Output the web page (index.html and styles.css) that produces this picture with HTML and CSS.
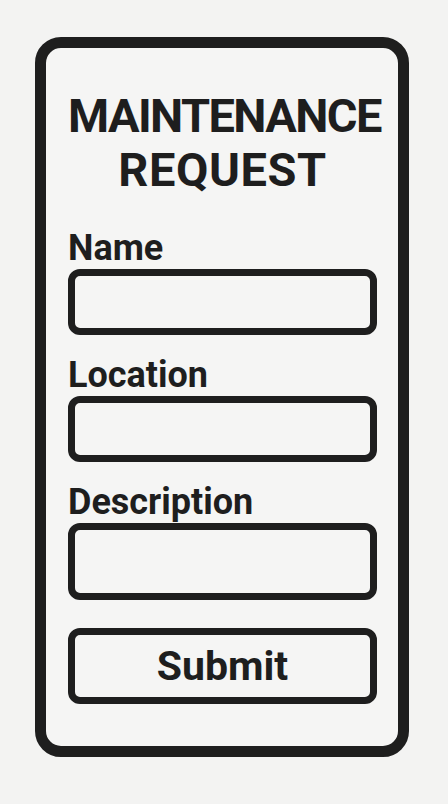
FILE: index.html
```html
<!DOCTYPE html>
<html lang="en">

<head>
    <meta charset="UTF-8">
    <meta name="viewport" content="width=device-width, initial-scale=1.0">
    <title>Maintenance Request</title>
    <link rel="stylesheet" href="styles.css">
</head>

<body>

    <div id="frame">
        <h1>MAINTENANCE<br><span class="wide">REQUEST</span></h1>

        <form id="request-form">
            <div class="field">
                <label for="name">Name</label>
                <input type="text" id="name">
            </div>

            <div class="field">
                <label for="location">Location</label>
                <input type="text" id="location">
            </div>

            <div class="field">
                <label for="description">Description</label>
                <textarea id="description"></textarea>
            </div>

            <button type="submit">Submit</button>
        </form>
    </div>

</body>

</html>
```

FILE: styles.css
```css
body {
    font-family: 'Roboto', 'Liberation Sans', sans-serif;
    margin: 0;
    padding: 0;
    background-color: #f3f3f2;
    color: #1e1e1e;
}

#frame {
    box-sizing: border-box;
    width: 374px;
    height: 720px;
    margin: 37px 0 0 35px;
    padding: 41px 21px 0 22px;
    border: 11px solid #1e1e1e;
    border-radius: 26px;
    background-color: #f5f5f4;
}

h1 {
    margin: 0 0 31px;
    font-size: 47px;
    font-weight: 700;
    line-height: 54px;
    letter-spacing: -1.6px;
    text-align: center;
}

h1 .wide {
    letter-spacing: 0.6px;
}

.field {
    margin-bottom: 20px;
}

.field label {
    display: block;
    margin-bottom: 1px;
    font-size: 36px;
    font-weight: 700;
    line-height: 40px;
}

.field input,
.field textarea {
    display: block;
    box-sizing: border-box;
    width: 100%;
    height: 66px;
    margin: 0;
    border: 7px solid #1e1e1e;
    border-radius: 12px;
    background: transparent;
    font-family: inherit;
    font-size: 20px;
    outline: none;
}

.field textarea {
    height: 77px;
    resize: none;
}

#request-form button {
    display: block;
    box-sizing: border-box;
    width: 100%;
    height: 76px;
    margin-top: 28px;
    border: 7px solid #1e1e1e;
    border-radius: 12px;
    background: transparent;
    color: #1e1e1e;
    font-family: inherit;
    font-size: 41px;
    font-weight: 700;
    cursor: pointer;
}
```
